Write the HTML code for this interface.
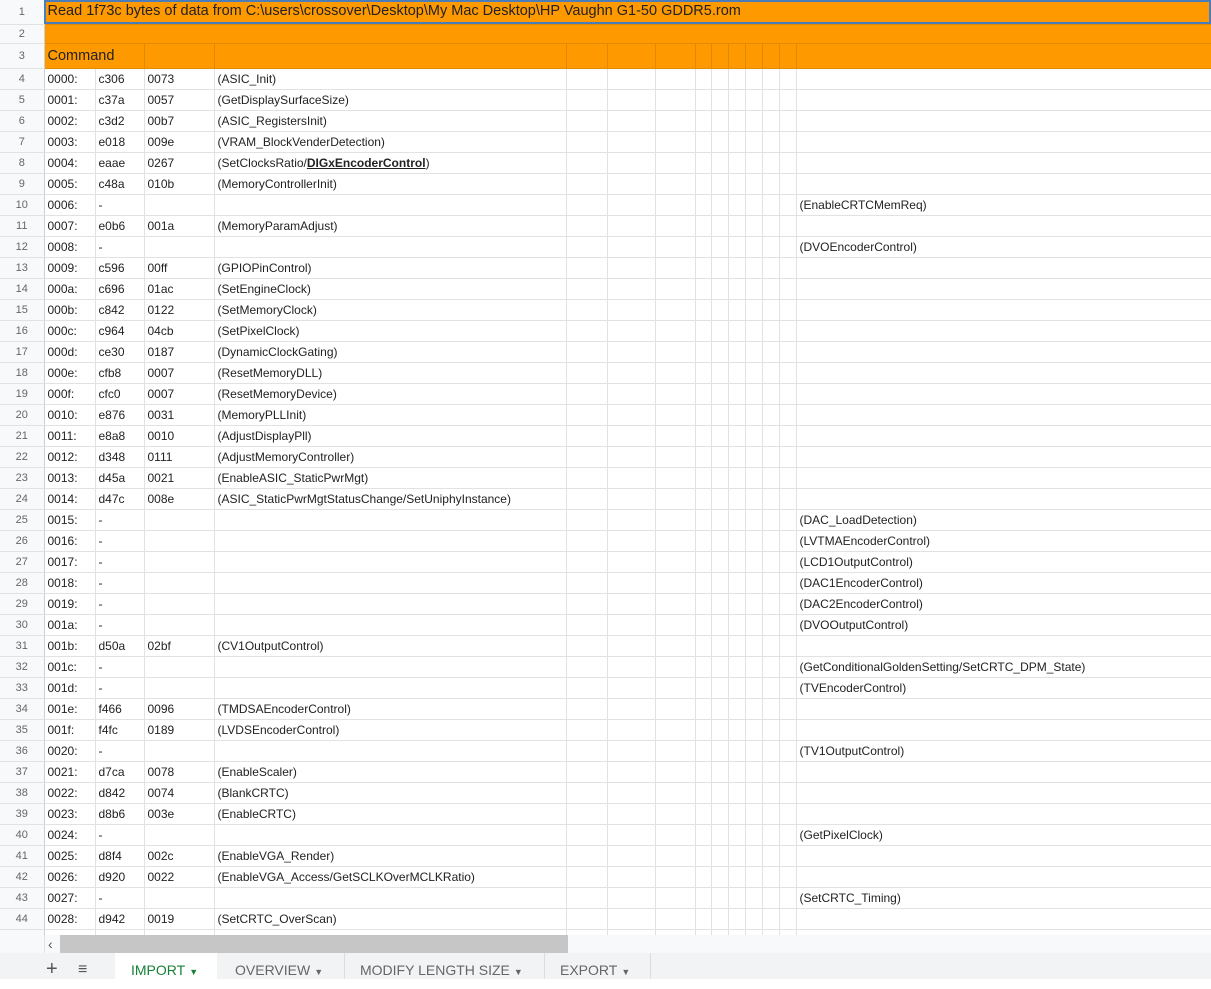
<!DOCTYPE html>
<html><head><meta charset="utf-8">
<style>
*{margin:0;padding:0;box-sizing:border-box}
body{width:1211px;height:979px;overflow:hidden;background:#fff;font-family:"Liberation Sans",sans-serif;position:relative}
table{border-collapse:collapse;table-layout:fixed;position:absolute;left:0;top:0;width:1211px}
td{border-right:1px solid #e2e2e2;border-bottom:1px solid #e2e2e2;font-size:12px;color:#222;padding:0 0 0 3px;white-space:nowrap;overflow:visible;height:21px;line-height:20px}
td.n{background:#f8f9fa;color:#666;text-align:center;padding:0;font-size:11px;border-right:1px solid #cfcfcf}
tr.o td{background:#ff9900;border-color:#e08a00}
tr.o td.n{background:#f8f9fa;border-color:#e2e2e2;border-right-color:#cfcfcf}
.r1 td{height:24px}
.r1 td.t{font-size:14.5px;color:#222;outline:2px solid #4a7ebb;outline-offset:-2px;line-height:23px}
.r2 td{height:19px;line-height:18px}
.r3 td{height:25px;border-bottom:1px solid #d07d00}
.r3 td.c{font-size:14.5px;line-height:24px}
b{text-decoration:underline;font-weight:bold}
#sb{position:absolute;left:0;top:935px;width:1211px;height:18px;background:#f8f9fa}
#sb .l{position:absolute;left:44px;top:0;width:1px;height:18px;background:#e2e2e2}
#sb .th{position:absolute;left:60px;top:0;width:508px;height:18px;background:#c6c6c6}
#sb .ar{position:absolute;left:48px;top:0;font-size:14px;color:#555;line-height:18px}
#tabs{position:absolute;left:0;top:953px;width:1211px;height:26px;background:#f1f3f4;font-size:14px;color:#666}
.tab{position:absolute;top:0;height:26px;line-height:34px;padding-left:16px}
.tab.a{background:#fff;color:#188038}
.sep{position:absolute;top:0;width:1px;height:26px;background:#dadce0}
.tab span{font-size:9px;margin-left:4px}
</style></head><body>
<table>
<colgroup><col style="width:44px"><col style="width:51px"><col style="width:49px"><col style="width:70px"><col style="width:352px"><col style="width:41px"><col style="width:48px"><col style="width:40px"><col style="width:16px"><col style="width:17px"><col style="width:17px"><col style="width:17px"><col style="width:17px"><col style="width:17px"><col style="width:415px"></colgroup>
<tr class="o r1"><td class="n">1</td><td class="t" colspan="14">Read 1f73c bytes of data from C:\users\crossover\Desktop\My Mac Desktop\HP Vaughn G1-50 GDDR5.rom</td></tr>
<tr class="o r2"><td class="n">2</td><td colspan="14"></td></tr>
<tr class="o r3"><td class="n">3</td><td class="c" colspan="2">Command</td><td></td><td></td><td></td><td></td><td></td><td></td><td></td><td></td><td></td><td></td><td></td><td></td></tr>
<tr><td class="n">4</td><td>0000:</td><td>c306</td><td>0073</td><td>(ASIC_Init)</td><td></td><td></td><td></td><td></td><td></td><td></td><td></td><td></td><td></td><td></td></tr>
<tr><td class="n">5</td><td>0001:</td><td>c37a</td><td>0057</td><td>(GetDisplaySurfaceSize)</td><td></td><td></td><td></td><td></td><td></td><td></td><td></td><td></td><td></td><td></td></tr>
<tr><td class="n">6</td><td>0002:</td><td>c3d2</td><td>00b7</td><td>(ASIC_RegistersInit)</td><td></td><td></td><td></td><td></td><td></td><td></td><td></td><td></td><td></td><td></td></tr>
<tr><td class="n">7</td><td>0003:</td><td>e018</td><td>009e</td><td>(VRAM_BlockVenderDetection)</td><td></td><td></td><td></td><td></td><td></td><td></td><td></td><td></td><td></td><td></td></tr>
<tr><td class="n">8</td><td>0004:</td><td>eaae</td><td>0267</td><td>(SetClocksRatio/<b>DIGxEncoderControl</b>)</td><td></td><td></td><td></td><td></td><td></td><td></td><td></td><td></td><td></td><td></td></tr>
<tr><td class="n">9</td><td>0005:</td><td>c48a</td><td>010b</td><td>(MemoryControllerInit)</td><td></td><td></td><td></td><td></td><td></td><td></td><td></td><td></td><td></td><td></td></tr>
<tr><td class="n">10</td><td>0006:</td><td>-</td><td></td><td></td><td></td><td></td><td></td><td></td><td></td><td></td><td></td><td></td><td></td><td>(EnableCRTCMemReq)</td></tr>
<tr><td class="n">11</td><td>0007:</td><td>e0b6</td><td>001a</td><td>(MemoryParamAdjust)</td><td></td><td></td><td></td><td></td><td></td><td></td><td></td><td></td><td></td><td></td></tr>
<tr><td class="n">12</td><td>0008:</td><td>-</td><td></td><td></td><td></td><td></td><td></td><td></td><td></td><td></td><td></td><td></td><td></td><td>(DVOEncoderControl)</td></tr>
<tr><td class="n">13</td><td>0009:</td><td>c596</td><td>00ff</td><td>(GPIOPinControl)</td><td></td><td></td><td></td><td></td><td></td><td></td><td></td><td></td><td></td><td></td></tr>
<tr><td class="n">14</td><td>000a:</td><td>c696</td><td>01ac</td><td>(SetEngineClock)</td><td></td><td></td><td></td><td></td><td></td><td></td><td></td><td></td><td></td><td></td></tr>
<tr><td class="n">15</td><td>000b:</td><td>c842</td><td>0122</td><td>(SetMemoryClock)</td><td></td><td></td><td></td><td></td><td></td><td></td><td></td><td></td><td></td><td></td></tr>
<tr><td class="n">16</td><td>000c:</td><td>c964</td><td>04cb</td><td>(SetPixelClock)</td><td></td><td></td><td></td><td></td><td></td><td></td><td></td><td></td><td></td><td></td></tr>
<tr><td class="n">17</td><td>000d:</td><td>ce30</td><td>0187</td><td>(DynamicClockGating)</td><td></td><td></td><td></td><td></td><td></td><td></td><td></td><td></td><td></td><td></td></tr>
<tr><td class="n">18</td><td>000e:</td><td>cfb8</td><td>0007</td><td>(ResetMemoryDLL)</td><td></td><td></td><td></td><td></td><td></td><td></td><td></td><td></td><td></td><td></td></tr>
<tr><td class="n">19</td><td>000f:</td><td>cfc0</td><td>0007</td><td>(ResetMemoryDevice)</td><td></td><td></td><td></td><td></td><td></td><td></td><td></td><td></td><td></td><td></td></tr>
<tr><td class="n">20</td><td>0010:</td><td>e876</td><td>0031</td><td>(MemoryPLLInit)</td><td></td><td></td><td></td><td></td><td></td><td></td><td></td><td></td><td></td><td></td></tr>
<tr><td class="n">21</td><td>0011:</td><td>e8a8</td><td>0010</td><td>(AdjustDisplayPll)</td><td></td><td></td><td></td><td></td><td></td><td></td><td></td><td></td><td></td><td></td></tr>
<tr><td class="n">22</td><td>0012:</td><td>d348</td><td>0111</td><td>(AdjustMemoryController)</td><td></td><td></td><td></td><td></td><td></td><td></td><td></td><td></td><td></td><td></td></tr>
<tr><td class="n">23</td><td>0013:</td><td>d45a</td><td>0021</td><td>(EnableASIC_StaticPwrMgt)</td><td></td><td></td><td></td><td></td><td></td><td></td><td></td><td></td><td></td><td></td></tr>
<tr><td class="n">24</td><td>0014:</td><td>d47c</td><td>008e</td><td>(ASIC_StaticPwrMgtStatusChange/SetUniphyInstance)</td><td></td><td></td><td></td><td></td><td></td><td></td><td></td><td></td><td></td><td></td></tr>
<tr><td class="n">25</td><td>0015:</td><td>-</td><td></td><td></td><td></td><td></td><td></td><td></td><td></td><td></td><td></td><td></td><td></td><td>(DAC_LoadDetection)</td></tr>
<tr><td class="n">26</td><td>0016:</td><td>-</td><td></td><td></td><td></td><td></td><td></td><td></td><td></td><td></td><td></td><td></td><td></td><td>(LVTMAEncoderControl)</td></tr>
<tr><td class="n">27</td><td>0017:</td><td>-</td><td></td><td></td><td></td><td></td><td></td><td></td><td></td><td></td><td></td><td></td><td></td><td>(LCD1OutputControl)</td></tr>
<tr><td class="n">28</td><td>0018:</td><td>-</td><td></td><td></td><td></td><td></td><td></td><td></td><td></td><td></td><td></td><td></td><td></td><td>(DAC1EncoderControl)</td></tr>
<tr><td class="n">29</td><td>0019:</td><td>-</td><td></td><td></td><td></td><td></td><td></td><td></td><td></td><td></td><td></td><td></td><td></td><td>(DAC2EncoderControl)</td></tr>
<tr><td class="n">30</td><td>001a:</td><td>-</td><td></td><td></td><td></td><td></td><td></td><td></td><td></td><td></td><td></td><td></td><td></td><td>(DVOOutputControl)</td></tr>
<tr><td class="n">31</td><td>001b:</td><td>d50a</td><td>02bf</td><td>(CV1OutputControl)</td><td></td><td></td><td></td><td></td><td></td><td></td><td></td><td></td><td></td><td></td></tr>
<tr><td class="n">32</td><td>001c:</td><td>-</td><td></td><td></td><td></td><td></td><td></td><td></td><td></td><td></td><td></td><td></td><td></td><td>(GetConditionalGoldenSetting/SetCRTC_DPM_State)</td></tr>
<tr><td class="n">33</td><td>001d:</td><td>-</td><td></td><td></td><td></td><td></td><td></td><td></td><td></td><td></td><td></td><td></td><td></td><td>(TVEncoderControl)</td></tr>
<tr><td class="n">34</td><td>001e:</td><td>f466</td><td>0096</td><td>(TMDSAEncoderControl)</td><td></td><td></td><td></td><td></td><td></td><td></td><td></td><td></td><td></td><td></td></tr>
<tr><td class="n">35</td><td>001f:</td><td>f4fc</td><td>0189</td><td>(LVDSEncoderControl)</td><td></td><td></td><td></td><td></td><td></td><td></td><td></td><td></td><td></td><td></td></tr>
<tr><td class="n">36</td><td>0020:</td><td>-</td><td></td><td></td><td></td><td></td><td></td><td></td><td></td><td></td><td></td><td></td><td></td><td>(TV1OutputControl)</td></tr>
<tr><td class="n">37</td><td>0021:</td><td>d7ca</td><td>0078</td><td>(EnableScaler)</td><td></td><td></td><td></td><td></td><td></td><td></td><td></td><td></td><td></td><td></td></tr>
<tr><td class="n">38</td><td>0022:</td><td>d842</td><td>0074</td><td>(BlankCRTC)</td><td></td><td></td><td></td><td></td><td></td><td></td><td></td><td></td><td></td><td></td></tr>
<tr><td class="n">39</td><td>0023:</td><td>d8b6</td><td>003e</td><td>(EnableCRTC)</td><td></td><td></td><td></td><td></td><td></td><td></td><td></td><td></td><td></td><td></td></tr>
<tr><td class="n">40</td><td>0024:</td><td>-</td><td></td><td></td><td></td><td></td><td></td><td></td><td></td><td></td><td></td><td></td><td></td><td>(GetPixelClock)</td></tr>
<tr><td class="n">41</td><td>0025:</td><td>d8f4</td><td>002c</td><td>(EnableVGA_Render)</td><td></td><td></td><td></td><td></td><td></td><td></td><td></td><td></td><td></td><td></td></tr>
<tr><td class="n">42</td><td>0026:</td><td>d920</td><td>0022</td><td>(EnableVGA_Access/GetSCLKOverMCLKRatio)</td><td></td><td></td><td></td><td></td><td></td><td></td><td></td><td></td><td></td><td></td></tr>
<tr><td class="n">43</td><td>0027:</td><td>-</td><td></td><td></td><td></td><td></td><td></td><td></td><td></td><td></td><td></td><td></td><td></td><td>(SetCRTC_Timing)</td></tr>
<tr><td class="n">44</td><td>0028:</td><td>d942</td><td>0019</td><td>(SetCRTC_OverScan)</td><td></td><td></td><td></td><td></td><td></td><td></td><td></td><td></td><td></td><td></td></tr>
<tr><td class="n">45</td><td></td><td></td><td></td><td></td><td></td><td></td><td></td><td></td><td></td><td></td><td></td><td></td><td></td><td></td></tr>
</table>
<div id="sb"><div class="l"></div><div class="ar">&lsaquo;</div><div class="th"></div></div>
<div id="tabs">
<div style="position:absolute;left:46px;top:4px;font-size:20px;color:#555;line-height:24px">+</div>
<div style="position:absolute;left:78px;top:3px;font-size:16px;color:#555;line-height:28px">&#8801;</div>
<div class="tab a" style="left:115px;width:102px">IMPORT<span>&#9660;</span></div>
<div class="tab" style="left:219px">OVERVIEW<span>&#9660;</span></div>
<div class="sep" style="left:344px"></div>
<div class="tab" style="left:344px">MODIFY LENGTH SIZE<span>&#9660;</span></div>
<div class="sep" style="left:544px"></div>
<div class="tab" style="left:544px">EXPORT<span>&#9660;</span></div>
<div class="sep" style="left:650px"></div>
</div>
</body></html>
